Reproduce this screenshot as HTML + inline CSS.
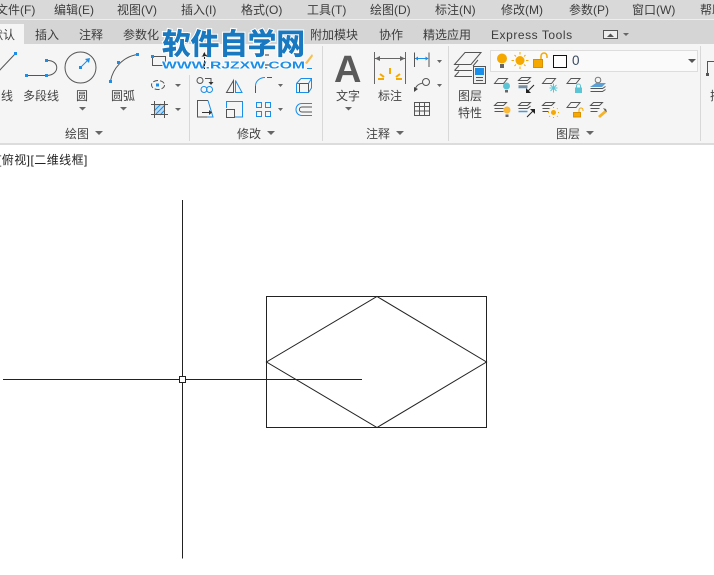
<!DOCTYPE html>
<html><head><meta charset="utf-8">
<style>
html,body{margin:0;padding:0;background:#fff;width:714px;height:575px;overflow:hidden}
svg{display:block}
text{font-family:"Liberation Sans","Noto Sans CJK SC",sans-serif;fill:#3c3c3c}
.m{font-size:12px}
.t{font-size:12px}
.l{font-size:12px;fill:#444}
</style></head><body>
<svg width="714" height="575" viewBox="0 0 714 575" xmlns="http://www.w3.org/2000/svg">
<rect width="714" height="575" fill="#fff"/>
<rect width="714" height="19" fill="#d9d9d9"/>
<rect y="19" width="714" height="25" fill="#d5d5d5"/>
<rect y="19" width="714" height="1" fill="#eee"/>
<rect y="44" width="714" height="99" fill="#f5f5f5"/>
<rect y="143" width="714" height="2" fill="#dcdcdc"/>
<rect y="24" width="24" height="20" fill="#f5f5f5"/>

<text class="m" x="-4" y="14">文件(F)</text>
<text class="m" x="54" y="14">编辑(E)</text>
<text class="m" x="117" y="14">视图(V)</text>
<text class="m" x="181" y="14">插入(I)</text>
<text class="m" x="241" y="14">格式(O)</text>
<text class="m" x="307" y="14">工具(T)</text>
<text class="m" x="370" y="14">绘图(D)</text>
<text class="m" x="435" y="14">标注(N)</text>
<text class="m" x="501" y="14">修改(M)</text>
<text class="m" x="569" y="14">参数(P)</text>
<text class="m" x="632" y="14">窗口(W)</text>
<text class="m" x="700" y="14">帮助</text>

<text class="t" x="-9" y="39">默认</text>
<text class="t" x="35" y="39">插入</text>
<text class="t" x="79" y="39">注释</text>
<text class="t" x="123" y="39">参数化</text>
<text class="t" x="310" y="39">附加模块</text>
<text class="t" x="379" y="39">协作</text>
<text class="t" x="423" y="39">精选应用</text>
<text class="t" x="491" y="39" style="letter-spacing:.55px">Express Tools</text>
<rect x="603.500" y="30.500" width="14" height="8" fill="#eee" stroke="#555"/>
<path d="M607 37l3.500-3.500 3.500 3.500z" fill="#555"/>
<path d="M623 33h6l-3 3z" fill="#666"/>

<!-- panel separators -->
<g stroke="#d8d8d8"><path d="M189.500 75V141M322.500 46V141M448.500 46V141M700.500 46V141"/></g>

<!-- draw: line -->
<path d="M-2 72L15 54" stroke="#555" fill="none"/>
<rect x="14" y="52" width="3" height="3" fill="#1a8ee8"/>
<text class="l" x="1" y="100">线</text>
<!-- polyline -->
<path d="M27 75.500H46M47 60.500C60 60 60 75 47 75.500" stroke="#555" fill="none"/>
<g fill="#1a8ee8"><rect x="25" y="74" width="3" height="3"/><rect x="45" y="74" width="3" height="3"/><rect x="45" y="59" width="3" height="3"/></g>
<text class="l" x="23" y="100">多段线</text>
<!-- circle -->
<circle cx="80.500" cy="67.500" r="15.500" fill="none" stroke="#555"/>
<path d="M81 67L89 59" stroke="#1a8ee8"/><path d="M90 58l-5 1 4 4z" fill="#1a8ee8"/>
<rect x="79" y="66" width="3" height="3" fill="#1a8ee8"/>
<text class="l" x="76" y="100">圆</text>
<path d="M79 107h7l-3.500 3.500z" fill="#666"/>
<!-- arc -->
<path d="M110.500 81C113 68 123 57 137 54.500" stroke="#555" fill="none"/>
<g fill="#1a8ee8"><rect x="109" y="80" width="3" height="3"/><rect x="117" y="61" width="3" height="3"/><rect x="136" y="53" width="3" height="3"/></g>
<text class="l" x="111" y="100">圆弧</text>
<path d="M120 107h7l-3.500 3.500z" fill="#666"/>
<!-- rect -->
<rect x="152.500" y="56.500" width="13" height="9" fill="none" stroke="#555"/>
<rect x="151" y="55" width="3" height="3" fill="#1a8ee8"/>
<!-- ellipse -->
<ellipse cx="158" cy="85" rx="6.500" ry="4.500" fill="none" stroke="#555" stroke-dasharray="5 2"/>
<rect x="156" y="83.500" width="3" height="3" fill="#1a8ee8"/>
<path d="M175 84h6l-3 3z" fill="#666"/>
<!-- hatch -->
<rect x="154" y="104" width="11" height="11" fill="#bcdcf5"/>
<path d="M154 111l7-7M156 114l9-9M160 115l5-5" stroke="#1a8ee8"/>
<path d="M151 104.500H168M151 114.500H168M154.500 101V118M164.500 101V118" stroke="#555" fill="none"/>
<path d="M175 108h6l-3 3z" fill="#666"/>
<text class="l" x="65" y="138">绘图</text>
<path d="M95 131h8l-4 4z" fill="#666"/>

<!-- modify -->
<g transform="translate(190,70)" fill="none" stroke="#555">
<circle cx="10" cy="10.500" r="3"/><path d="M15 8.500h6v5"/><path d="M18.500 12l2.500 3 2.500-3z" fill="#333" stroke="none"/>
<circle cx="14" cy="19.500" r="3" stroke="#1a8ee8"/><circle cx="19.500" cy="19.500" r="3" stroke="#1a8ee8"/>
<path d="M36.500 22.500L43.500 10.500V22.500z"/><path d="M45.500 10.500L52 22.500H45.500z" stroke="#1a8ee8"/>
<path d="M65.500 23V16" /><path d="M65.500 16C65.500 11 70 7.500 75 7.500" stroke="#1a8ee8"/><path d="M77 7.500H82"/>
<rect x="109.500" y="13.500" width="9" height="9"/><path d="M106.500 13.500V22.500H118.500M106.500 13.500h3M111 8.500L106.500 13.500M111 8.500H121.500V18L118.500 22.500M118.500 13.500L121.500 8.500" stroke="#1a8ee8"/>
<path d="M18 30.500H7.500V47H17"/><path d="M18 30.500l5 16.500h-6" stroke="#1a8ee8"/><path d="M12 42.500h8" stroke="#333"/><path d="M19 40l3 2.500-3 2.500z" fill="#333" stroke="none"/>
<path d="M36.500 38V31.500H52.500V47H45" stroke="#1a8ee8"/><rect x="36.500" y="39.500" width="8" height="8"/>
<g stroke="#1a8ee8"><rect x="66.500" y="32.500" width="5" height="5"/><rect x="75.500" y="32.500" width="5" height="5"/><rect x="66.500" y="41.500" width="5" height="5"/><rect x="75.500" y="41.500" width="5" height="5"/></g>
<path d="M122 33.500H112C104 33.500 104 45.500 112 45.500H122" stroke="#1a8ee8"/><path d="M122 37H112C108.500 37 108.500 42 112 42H122"/>
</g>
<path d="M278 84h5l-2.500 3z" fill="#666"/><path d="M278 108h5l-2.500 3z" fill="#666"/>
<text class="l" x="237" y="138">修改</text>
<path d="M267 131h8l-4 4z" fill="#666"/>

<!-- annotate -->
<text x="334" y="82" style="font-size:38px;font-weight:bold;fill:#5a5a5a">A</text>
<text class="l" x="336" y="100">文字</text>
<path d="M345 107h7l-3.500 3.500z" fill="#666"/>
<path d="M374.500 52V84M405.500 52V84M375 58.500H405" stroke="#666" fill="none"/>
<path d="M375 58.500l5-2.500v5zM405 58.500l-5-2.500v5z" fill="#666"/>
<path d="M378 79h6M380 74l4 3M390 68v6M400 74l-4 3M396 79h6" stroke="#f5a800" stroke-width="2" fill="none"/>
<text class="l" x="378" y="100">标注</text>
<path d="M414.500 52.500V67M429 52.500V67" stroke="#555"/><path d="M415 58.500H428" stroke="#1a8ee8"/>
<path d="M415 58.500l3-2v4zM428.500 58.500l-3-2v4z" fill="#1a8ee8"/>
<path d="M437 60h5l-2.500 3z" fill="#666"/>
<circle cx="426" cy="82" r="3.500" fill="none" stroke="#555"/><path d="M423 83C418 84 416 86 415 90" stroke="#555" fill="none"/><path d="M414 92l0-5 4 2z" fill="#444"/>
<path d="M437 84h5l-2.500 3z" fill="#666"/>
<path d="M414.500 102.500H429.500V115.500H414.500ZM414.500 106.500H429.500M414.500 111H429.500M419.500 102.500V115.500M424.500 102.500V115.500" fill="none" stroke="#555"/>
<text class="l" x="366" y="138">注释</text>
<path d="M396 131h8l-4 4z" fill="#666"/>

<!-- layer properties -->
<g fill="none" stroke="#555">
<path d="M454.500 64.500L465 52.500H481L471 64.500Z"/>
<path d="M454.500 70.500L459 65.500M472 70.500H454.500M478 60L473 66"/>
<path d="M454.500 76.500L459 71.500M472 76.500H454.500"/>
<rect x="473.500" y="66.500" width="12" height="17" fill="#eee"/>
</g>
<rect x="475" y="68" width="9" height="7" fill="#1a8ee8"/>
<path d="M476 77.500h7M476 80.500h7" stroke="#555"/>
<text class="l" x="458" y="100">图层</text>
<text class="l" x="458" y="117">特性</text>

<!-- layer combo -->
<rect x="490.500" y="50.500" width="207" height="21" fill="#fafafa" stroke="#ddd"/>
<circle cx="502" cy="58.500" r="5" fill="#f5a800"/><rect x="500" y="64" width="4" height="4" fill="#666"/>
<circle cx="520" cy="60.500" r="4.500" fill="#f5a800"/>
<path d="M514 60.500h-2.500M528.500 60.500h-2.500M520 54.500v-2.500M520 69v-2.500M516 56.500l-1.500-1.500M525.500 66l-1.500-1.500M516 64.500l-1.500 1.500M525.500 55l-1.500 1.500" stroke="#f5a800"/>
<rect x="533.500" y="59.500" width="9" height="8" fill="#f5a800" stroke="#d88f00"/>
<path d="M541 59v-3a3 3 0 0 1 6 0v2" fill="none" stroke="#f5a800" stroke-width="1.500"/>
<rect x="553.500" y="55.500" width="13" height="12" fill="#fff" stroke="#111"/>
<text x="572" y="65" style="font-size:13.500px;fill:#3a4a60">0</text>
<path d="M688 59h8l-4 4z" fill="#555"/>

<!-- layer icons -->
<g fill="none" stroke="#555">
<path d="M494.500 83.500l4-5h9l-4 5z"/>
<path d="M518.500 80.500l3-3h9l-3 3zM518.500 83.500h9l3-2.500M518.500 86h9"/>
<path d="M542.500 83.500l4-5h9l-4 5z"/>
<path d="M567 83.500l4-5h9l-4 5z"/>
<path d="M590.500 88.500h12l3-2M590.500 91.500h12l3-2"/>
<path d="M494.500 105.500l3-3h9l-3 3zM494.500 108.500h9M494.500 111.500h9"/>
<path d="M518.500 105.500l3-3h9l-3 3zM518.500 108.500h9l3-2.500"/>
<path d="M542.500 105.500l3-3h9l-3 3zM542.500 108.500h7M542.500 111.500h6"/>
<path d="M567 107.500l4-5h9l-4 5z"/>
<path d="M590.500 105.500l3-3h9l-3 3zM590.500 108.500h9M590.500 111.500h7"/>
</g>
<circle cx="506.500" cy="86" r="3.500" fill="#5cc5d5"/><rect x="505" y="90" width="3" height="2.500" fill="#666"/>
<path d="M518.500 87.500h9" stroke="#4a9ad8" stroke-width="1.500"/>
<path d="M534 85L527 92" stroke="#222"/><path d="M526 93v-5l5 5z" fill="#222"/>
<path d="M553.500 83.500v9M549.500 88h8M550.500 85l6 6M556.500 85l-6 6" stroke="#5cc5d5" fill="none"/>
<rect x="575" y="87.500" width="7" height="5.500" fill="#5cc5d5"/><path d="M576.500 87.500v-1.500a2 2 0 0 1 4 0v1.500" stroke="#5cc5d5" fill="none"/>
<circle cx="598" cy="80" r="2.800" fill="none" stroke="#777"/>
<path d="M590 87l6-4h10l-4 4z" fill="#5a9fd5"/>
<circle cx="507" cy="110" r="3.500" fill="#f9b93a"/><rect x="505.500" y="114.500" width="3" height="2.500" fill="#666"/>
<path d="M518.500 111.500h9" stroke="#4a9ad8" stroke-width="1.500"/>
<path d="M527 117l7-7" stroke="#222"/><path d="M535 109v5l-5-5z" fill="#222"/>
<circle cx="553.500" cy="112.500" r="2.500" fill="#f5a800"/>
<path d="M549 112.500h-1M559 112.500h-1M553.500 108v-1M553.500 118v-1M550 109l-.7-.7M557.700 116.700l-.7-.7M550 116l-.7.7M557.700 108.300l-.7.7" stroke="#f5a800"/>
<rect x="573.500" y="112.500" width="7" height="4.500" fill="#f5a800" stroke="#d88f00"/>
<path d="M579 112v-2a2 2 0 0 1 4 0v1" stroke="#f5a800" fill="none"/>
<path d="M598 116l7-6 2 2-7 6z" fill="#f5b428"/><path d="M603 108l3 1 1 3-2-1z" fill="#666"/>
<text class="l" x="556" y="138">图层</text>
<path d="M586 131h8l-4 4z" fill="#666"/>

<!-- right partial -->
<path d="M707.500 75V61.500H714" fill="none" stroke="#555"/><rect x="706" y="73" width="3" height="3" fill="#555"/>
<text class="l" x="710" y="100">插</text>

<!-- watermark -->
<text x="162" y="54" textLength="143" lengthAdjust="spacingAndGlyphs" style="font-size:29px;font-weight:bold;fill:#1878c0;stroke:#fff;stroke-width:2.500px;paint-order:stroke">软件自学网</text>
<text x="162" y="54" textLength="143" lengthAdjust="spacingAndGlyphs" style="font-size:29px;font-weight:bold;fill:#1878c0;stroke:#1878c0;stroke-width:.5px">软件自学网</text>
<text x="162" y="68.500" textLength="143" lengthAdjust="spacingAndGlyphs" style="font-size:10.500px;font-weight:bold;fill:#1a8ee8;stroke:#fff;stroke-width:1.500px;paint-order:stroke">WWW.RJZXW.COM</text>
<path d="M305 63l7-9 1 2-6 8z" fill="#f5c050"/>
<path d="M307 68.500h5" stroke="#1a8ee8"/>
<path d="M204.500 53l-2 3h4zM204.500 57v12" stroke="#222" stroke-dasharray="2 1.500" fill="#222"/>
<path d="M265 55h4M265 65h4" stroke="#333"/>

<!-- viewport label -->
<text x="-2" y="164" style="font-size:12px;fill:#222;letter-spacing:.45px">[俯视][二维线框]</text>

<!-- drawing -->
<g fill="none" stroke="#222" stroke-width="1">
<path d="M182.500 200V558.500"/>
<path d="M3 379.500H362"/>
<rect x="266.500" y="296.500" width="220" height="131"/>
<path d="M377 296.500L486.500 362L377 427.500L266.500 362Z"/>
<rect x="179.500" y="376.500" width="6" height="6" fill="#fff"/>
</g>
</svg>
</body></html>
